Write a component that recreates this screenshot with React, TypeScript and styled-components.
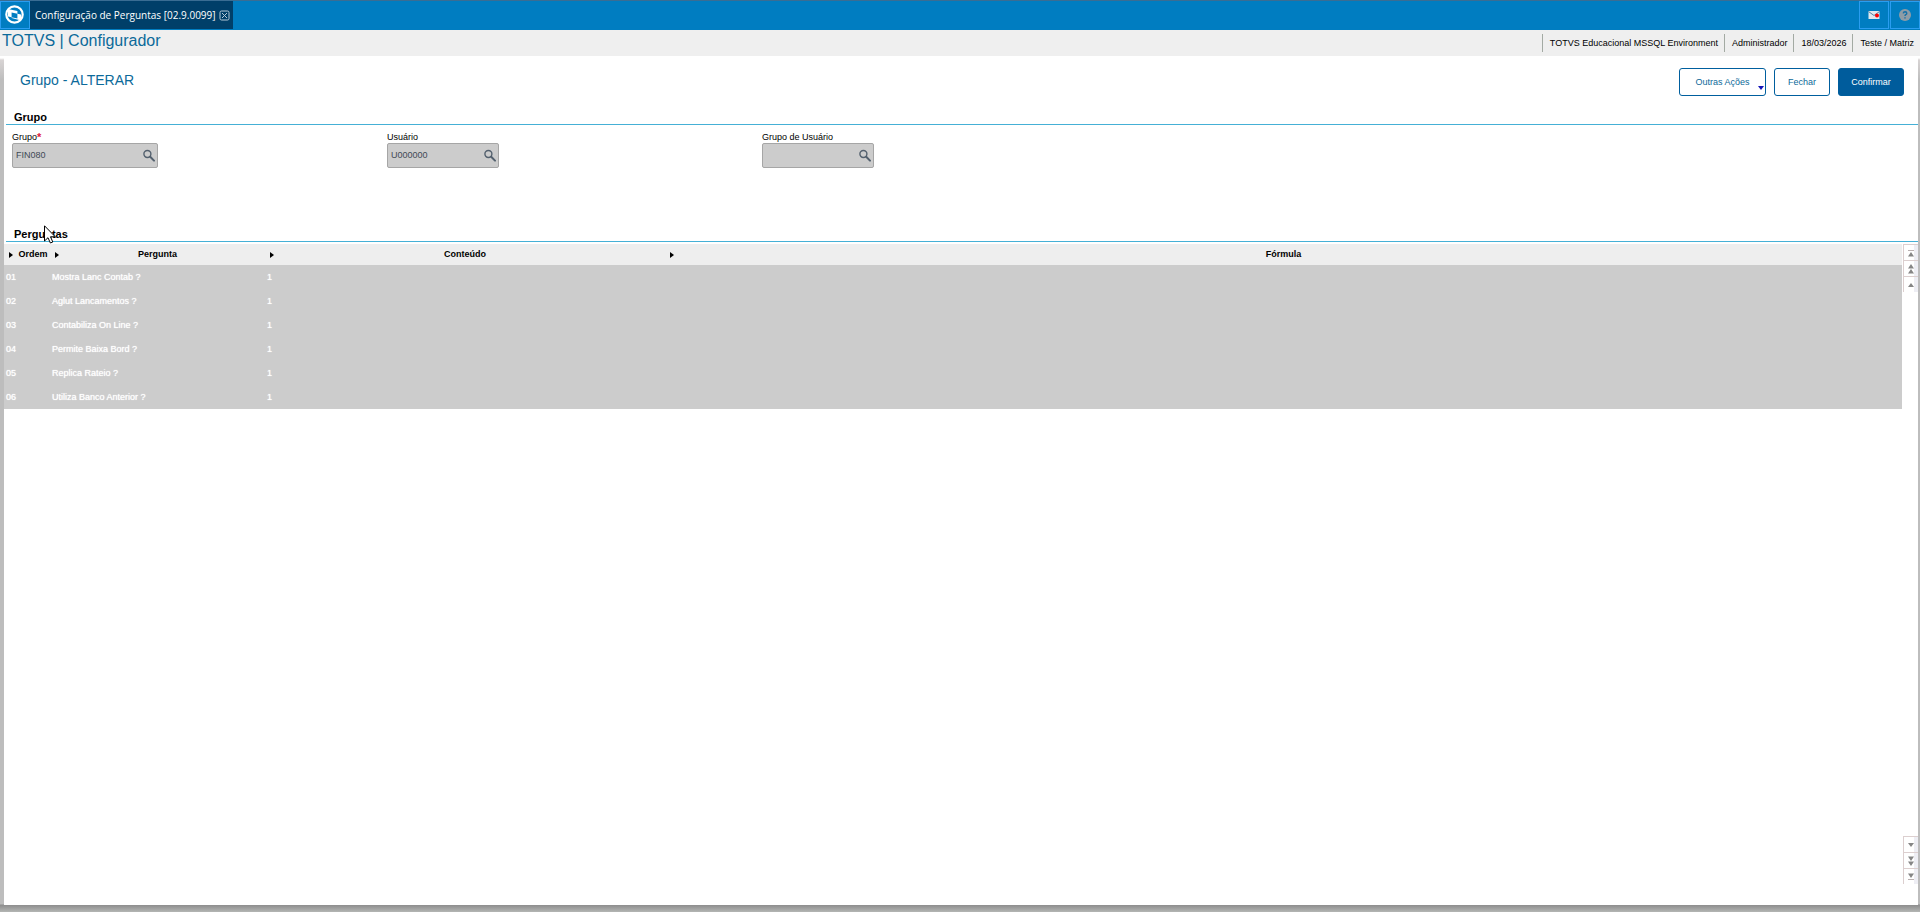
import React from "react";
import styled, { createGlobalStyle } from "styled-components";

const GlobalStyle = createGlobalStyle`
  * { box-sizing: border-box; }
  body {
    margin: 0;
    background: #fff;
    color: #000;
    font-family: "Liberation Sans", Arial, sans-serif;
    font-size: 9px;
  }
  button, input { font: inherit; }
`;

const Page = styled.div`
  display: flex;
  flex-direction: column;
  min-height: 100vh;
`;

const TopBar = styled.nav`
  display: flex;
  height: 30px;
  background: #007dc1;
  border-top: 1px solid #3a6d93;
`;

const BarButton = styled.button<{ $width: number }>`
  display: flex;
  align-items: center;
  justify-content: center;
  width: ${(p) => p.$width}px;
  height: 28px;
  padding: 0;
  background: #007dc1;
  border: 1px solid #2a9df0;
`;

const Tab = styled.div`
  display: flex;
  align-items: center;
  gap: 3px;
  height: 28px;
  padding: 0 3px 0 5px;
  background: #003f69;
  color: #fff;
  font-family: "Open Sans", sans-serif;
  font-size: 10px;
  white-space: nowrap;
`;

const TabClose = styled.button`
  display: flex;
  padding: 0;
  background: none;
  border: 0;
`;

const BarEnd = styled.div`
  display: flex;
  gap: 1px;
  margin-left: auto;
`;

const Header = styled.header`
  display: flex;
  justify-content: space-between;
  height: 26px;
  background: #efefef;
`;

const Product = styled.h1`
  margin: 0;
  padding-left: 2px;
  color: #0c6a9a;
  font-size: 16px;
  font-weight: 400;
  line-height: 22px;
`;

const Session = styled.ul`
  display: flex;
  margin: 4px 0 0;
  padding: 0;
  list-style: none;
`;

const SessionItem = styled.li`
  height: 18px;
  padding: 0 6px 0 7px;
  border-left: 1px solid #a3aaa3;
  line-height: 18px;
  white-space: nowrap;
`;

const Stage = styled.div`
  display: flex;
  flex: 1;
  padding: 0 2px 7px 4px;
  background: linear-gradient(#fff 2px, #d8d4d4 4px, #bdbdbd 24px, #bdbdbd calc(100% - 8px), #8d8d8d calc(100% - 7px), #b4b6b4 100%);
`;

const Panel = styled.main`
  display: flex;
  flex: 1;
  flex-direction: column;
  background: #fff;
`;

const TitleRow = styled.div`
  display: flex;
  align-items: flex-start;
  justify-content: space-between;
  height: 54px;
  padding: 12px 14px 0 16px;
`;

const Title = styled.h2`
  margin: 0;
  color: #0c6a9a;
  font-size: 14px;
  font-weight: 400;
  line-height: 24px;
`;

const Actions = styled.div`
  display: flex;
  gap: 8px;
`;

const Action = styled.button<{ $width: number; $primary?: boolean }>`
  display: flex;
  align-items: center;
  justify-content: center;
  position: relative;
  width: ${(p) => p.$width}px;
  height: 28px;
  padding: 0;
  border: 1px solid #005f9e;
  border-radius: 3px;
  background: ${(p) => (p.$primary ? "#005c9c" : "#fff")};
  color: ${(p) => (p.$primary ? "#fff" : "#0c6a9a")};
`;

const MenuMark = styled.span`
  position: absolute;
  right: 1px;
  bottom: 5px;
  border: 3px solid transparent;
  border-top: 4px solid #1414b8;
  border-bottom: 0;
`;

const SectionTitle = styled.h3`
  margin: 0 0 0 2px;
  padding-left: 8px;
  border-bottom: 1px solid #45b0d6;
  font-size: 11px;
  font-weight: 700;
  line-height: 14px;
`;

const Fields = styled.div`
  display: flex;
  height: 102px;
  padding: 6px 8px 0;
`;

const Field = styled.div`
  width: 375px;
`;

const Label = styled.label`
  display: flex;
  height: 12px;
  line-height: 12px;
`;

const Required = styled.span`
  color: #e0203c;
  font-size: 11px;
  font-weight: 700;
`;

const Lookup = styled.div<{ $width: number }>`
  display: flex;
  align-items: center;
  width: ${(p) => p.$width}px;
  height: 25px;
  padding: 0 2px 1px 3px;
  background: #ccc;
  border: 1px solid #a6a6a6;
  border-radius: 2px;
`;

const LookupInput = styled.input`
  flex: 1;
  min-width: 0;
  padding: 0;
  background: none;
  border: 0;
  color: #3f4a55;
`;

const LookupButton = styled.button`
  display: flex;
  padding: 0;
  background: none;
  border: 0;
`;

const GridArea = styled.div`
  display: flex;
  flex: 1;
  gap: 1px;
  margin: 2px 0 21px;
`;

const TableBox = styled.div`
  flex: 1;
`;

const Table = styled.table`
  width: 100%;
  border-collapse: collapse;
  table-layout: fixed;
`;

const HeadCell = styled.th<{ $width?: number; $shift?: boolean }>`
  position: relative;
  width: ${(p) => (p.$width ? `${p.$width}px` : "auto")};
  height: 21px;
  padding: 0 0 2px ${(p) => (p.$shift ? 12 : 0)}px;
  background: #eee;
  font-weight: 700;
  text-align: center;
`;

const SortMark = styled.span`
  position: absolute;
  top: 8px;
  left: 5px;
  border: 3px solid transparent;
  border-left: 4px solid #000;
  border-right: 0;
`;

const Cell = styled.td`
  height: 24px;
  padding: 0 2px;
  background: #ccc;
  color: #fff;
  text-shadow: 0 0 1px #fff;
  white-space: nowrap;
`;

const ScrollRail = styled.div`
  display: flex;
  flex-direction: column;
  justify-content: space-between;
  width: 15px;
`;

const ScrollButton = styled.button`
  display: flex;
  align-items: center;
  justify-content: center;
  width: 15px;
  height: 16px;
  padding: 0;
  background: linear-gradient(90deg, #fff 70%, #eeeef4 70%);
  border: 0;
  border-top: 1px solid #dccfcf;
  border-left: 1px solid #dccfcf;
`;

const Pointer = styled.svg`
  position: absolute;
  top: 225px;
  left: 44px;
  pointer-events: none;
`;

const Search = () => (
  <svg width="13" height="13" viewBox="0 0 13 13" fill="none" aria-hidden="true">
    <circle cx="5.4" cy="5" r="3.5" stroke="#53606e" strokeWidth="1.4" />
    <path d="M8.2 7.8L12 11.6" stroke="#53606e" strokeWidth="2" strokeLinecap="round" />
  </svg>
);

type ScrollKind = "edge" | "page" | "line";

const marks: Record<ScrollKind, string> = {
  edge: "M3 9.5L6 5L9 9.5Z",
  page: "M3 5.5L6 1L9 5.5ZM3 10.5L6 6L9 10.5Z",
  line: "M3 8L6 4L9 8Z",
};

const ScrollMark = ({ kind, down }: { kind: ScrollKind; down?: boolean }) => (
  <svg width="12" height="12" viewBox="0 0 12 12" aria-hidden="true">
    <g transform={down ? "rotate(180 6 6)" : undefined}>
      <path d={marks[kind]} fill="#858585" />
      {kind === "edge" && <path d="M3 3.5H9" stroke="#b9b0b0" />}
    </g>
  </svg>
);

const fields = [
  { id: "grupo", label: "Grupo", value: "FIN080", width: 146, required: true },
  { id: "usuario", label: "Usuário", value: "U000000", width: 112 },
  { id: "grupo-usuario", label: "Grupo de Usuário", value: "", width: 112 },
];

const questions = [
  "Mostra Lanc Contab ?",
  "Aglut Lancamentos ?",
  "Contabiliza On Line ?",
  "Permite Baixa Bord ?",
  "Replica Rateio ?",
  "Utiliza Banco Anterior ?",
];

const columns = [
  { name: "Ordem", width: 46, shift: true },
  { name: "Pergunta", width: 215 },
  { name: "Conteúdo", width: 400 },
  { name: "Fórmula" },
];

const kinds: ScrollKind[] = ["edge", "page", "line"];

export default function App() {
  return (
    <Page>
      <GlobalStyle />
      <TopBar>
        <BarButton $width={30} aria-label="Início">
          <svg width="20" height="20" viewBox="0 0 20 20" aria-hidden="true">
            <circle cx="9.5" cy="9.5" r="8.2" fill="#007dc1" stroke="#fff" strokeWidth="2.2" />
            <path
              d="M3 4L12.4 6V13.4L3 11.4ZM6.6 7.4L16 9.4V15.4L6.6 13Z"
              fill="#fff"
              fillRule="evenodd"
            />
          </svg>
        </BarButton>
        <Tab>
          Configuração de Perguntas [02.9.0099]
          <TabClose aria-label="Fechar aba">
            <svg width="11" height="11" viewBox="0 0 11 11" fill="none" stroke="#b6cad8" aria-hidden="true">
              <rect x="1" y="1" width="9" height="9" rx="1.5" />
              <path d="M3 3L8 8M8 3L3 8" />
            </svg>
          </TabClose>
        </Tab>
        <BarEnd>
          <BarButton $width={30} aria-label="Mensagens">
            <svg width="12" height="10" viewBox="0 0 12 10" aria-hidden="true">
              <rect x="0.5" y="1" width="11" height="8" fill="#e3e9ee" />
              <path d="M0.5 1.5L6 5.5L11.5 1.5" fill="none" stroke="#57809f" />
              <circle cx="9" cy="5.5" r="2" fill="#f00" />
            </svg>
          </BarButton>
          <BarButton $width={30} aria-label="Ajuda">
            <svg width="12" height="12" viewBox="0 0 12 12" fill="none" aria-hidden="true">
              <circle cx="6" cy="6" r="6" fill="#8e9ca6" />
              <path d="M4.2 4.4Q4.5 2.8 6.1 2.8Q7.8 2.9 7.8 4.3Q7.8 5.2 6.8 5.7Q6 6.1 6 7" stroke="#1370a8" strokeWidth="1.4" />
              <path d="M5.3 8.2H6.7V9.6H5.3Z" fill="#1370a8" />
            </svg>
          </BarButton>
        </BarEnd>
      </TopBar>
      <Header>
        <Product>TOTVS | Configurador</Product>
        <Session>
          <SessionItem>TOTVS Educacional MSSQL Environment</SessionItem>
          <SessionItem>Administrador</SessionItem>
          <SessionItem>18/03/2026</SessionItem>
          <SessionItem>Teste / Matriz</SessionItem>
        </Session>
      </Header>
      <Stage>
        <Panel>
          <TitleRow>
            <Title>Grupo - ALTERAR</Title>
            <Actions>
              <Action $width={87}>
                Outras Ações
                <MenuMark />
              </Action>
              <Action $width={56}>Fechar</Action>
              <Action $width={66} $primary>Confirmar</Action>
            </Actions>
          </TitleRow>
          <SectionTitle>Grupo</SectionTitle>
          <Fields>
            {fields.map((f) => (
              <Field key={f.id}>
                <Label htmlFor={f.id}>
                  {f.label}
                  {f.required && <Required>*</Required>}
                </Label>
                <Lookup $width={f.width}>
                  <LookupInput id={f.id} defaultValue={f.value} readOnly />
                  <LookupButton aria-label={`Pesquisar ${f.label}`}>
                    <Search />
                  </LookupButton>
                </Lookup>
              </Field>
            ))}
          </Fields>
          <SectionTitle>Perguntas</SectionTitle>
          <GridArea>
            <TableBox>
              <Table>
                <thead>
                  <tr>
                    {columns.map((c) => (
                      <HeadCell key={c.name} $width={c.width} $shift={c.shift}>
                        <SortMark />
                        {c.name}
                      </HeadCell>
                    ))}
                  </tr>
                </thead>
                <tbody>
                  {questions.map((q, i) => (
                    <tr key={q}>
                      <Cell>{`0${i + 1}`}</Cell>
                      <Cell>{q}</Cell>
                      <Cell>1</Cell>
                      <Cell />
                    </tr>
                  ))}
                </tbody>
              </Table>
            </TableBox>
            <ScrollRail>
              <div>
                {kinds.map((k) => (
                  <ScrollButton key={k} aria-label={`Subir ${k}`}>
                    <ScrollMark kind={k} />
                  </ScrollButton>
                ))}
              </div>
              <div>
                {[...kinds].reverse().map((k) => (
                  <ScrollButton key={k} aria-label={`Descer ${k}`}>
                    <ScrollMark kind={k} down />
                  </ScrollButton>
                ))}
              </div>
            </ScrollRail>
          </GridArea>
        </Panel>
      </Stage>
      <Pointer width="12" height="19" viewBox="0 0 12 19" aria-hidden="true">
        <path d="M0.5 0.8V16L4 12.7L6.4 18L8.8 17L6.5 11.8H11.3Z" fill="#fff" stroke="#000" />
      </Pointer>
    </Page>
  );
}
